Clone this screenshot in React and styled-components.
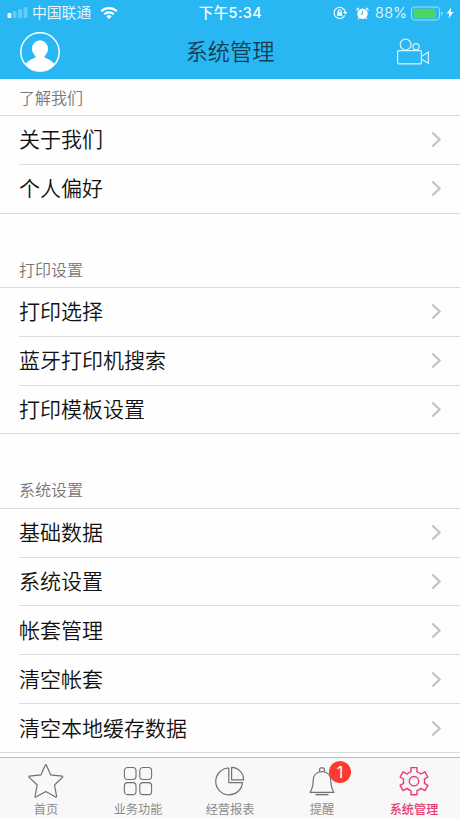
// App.jsx
import styled, { createGlobalStyle } from 'styled-components';

const GlobalStyle = createGlobalStyle`
  * {
    box-sizing: border-box;
  }

  body {
    margin: 0;
    background: #fefefe;
    font-family: Inter, "Noto Sans CJK SC", sans-serif;
  }
`;

const Screen = styled.div`
  display: flex;
  flex-direction: column;
  height: 818px;
  overflow: hidden;
  background: #fefefe;
`;

const Header = styled.header`
  flex: none;
  height: 79px;
  background: #29b7f4;
  color: white;
`;

const StatusBar = styled.div`
  display: grid;
  grid-template-columns: 1fr auto 1fr;
  align-items: center;
  height: 26px;
  padding: 0 6px 0 7px;
`;

const StatusSide = styled.div`
  display: flex;
  align-items: center;
  justify-content: ${(props) => (props.$end ? 'flex-end' : 'flex-start')};

  svg {
    display: block;
    flex: none;
  }
`;

const Carrier = styled.span`
  margin: 0 9px 0 4px;
  font-size: 14.8px;
  font-weight: 350;
  line-height: 26px;
  color: #eefaff;
`;

const Clock = styled.span`
  font-size: 14.4px;
  font-weight: 500;
  line-height: 26px;
  letter-spacing: 0.5px;
`;

const Percent = styled.span`
  margin: 0 4px 0 6px;
  font-size: 14.5px;
  font-weight: 350;
  line-height: 26px;
  letter-spacing: 0.2px;
`;

const StatusIcons = styled.span`
  display: flex;
  align-items: center;
  gap: 8px;
`;

const NavBar = styled.div`
  display: grid;
  grid-template-columns: 60px 1fr 60px;
  align-items: center;
  height: 52px;
  padding: 0 10px;
`;

const NavButton = styled.button`
  display: flex;
  justify-content: ${(props) => (props.$end ? 'flex-start' : 'center')};
  padding: 0 0 0 ${(props) => (props.$end ? 6 : 0)}px;
  border: none;
  background: none;
  color: white;
`;

const Title = styled.h1`
  margin: 0;
  text-align: center;
  font-size: 22.2px;
  font-weight: 350;
  line-height: 50px;
  color: #173e50;
`;

const Content = styled.main`
  flex: 1;
  min-height: 0;
  overflow: hidden;
`;

const SectionTitle = styled.h2`
  display: flex;
  align-items: flex-end;
  height: ${(props) => (props.$first ? 37 : 74.4)}px;
  margin: 0;
  padding: 0 19px 4.5px;
  border-bottom: 1px solid #d9d9db;
  font-size: 16px;
  font-weight: 350;
  line-height: 26px;
  color: #77777a;
`;

const List = styled.ul`
  margin: 0;
  padding: 0;
  list-style: none;
  border-bottom: 1px solid #d9d9db;
`;

const Row = styled.li`
  display: flex;
  align-items: center;
  justify-content: space-between;
  height: 48.82px;
  margin-left: 19px;
  padding: 1px 18px 0 0;
  border-bottom: 1px solid #dcdcde;
  font-size: 21px;
  font-weight: 350;
  line-height: 30px;
  color: #111;

  &:last-child {
    height: 47.82px;
    border-bottom: none;
  }
`;

const TabBar = styled.nav`
  display: grid;
  grid-template-columns: repeat(5, 1fr);
  flex: none;
  height: 61px;
  border-top: 1px solid #bcbcbe;
  background: #f8f8f8;
`;

const Tab = styled.a`
  display: flex;
  flex-direction: column;
  align-items: center;
  padding-top: 5px;
  color: ${(props) => (props.$active ? '#e83a75' : '#8b8b8b')};
  font-size: 12.2px;
  font-weight: ${(props) => (props.$active ? 500 : 400)};
  line-height: 17px;
`;

const TabIcon = styled.span`
  position: relative;
  display: block;
  width: 36px;
  height: 38px;
  color: ${(props) => (props.$active ? '#e83a75' : '#707070')};

  svg {
    display: block;
  }
`;

const Badge = styled.span`
  position: absolute;
  top: -2px;
  left: 25px;
  width: 22px;
  height: 22px;
  border-radius: 50%;
  background: #fc3a30;
  color: white;
  font-size: 16px;
  font-weight: 400;
  line-height: 22px;
  text-align: center;
`;

const SignalIcon = () => (
  <svg width="21" height="14" viewBox="0 0 21 14" fill="#fff">
    <rect x="0.5" y="7" width="3.8" height="5" rx="1" />
    <g opacity="0.28">
      <rect x="5.8" y="5" width="3.8" height="7" rx="1" />
      <rect x="11.2" y="3" width="3.8" height="9" rx="1" />
      <rect x="16.6" y="1" width="3.8" height="11" rx="1" />
    </g>
  </svg>
);

const WifiIcon = () => (
  <svg width="18" height="14" viewBox="0 0 18 14" fill="none" stroke="#fff" strokeWidth="2.2">
    <path d="M1.2 5.2a11.2 11.2 0 0 1 15.6 0" />
    <path d="M4.2 8.3a6.8 6.8 0 0 1 9.6 0" />
    <path d="M9 13 6.4 10.4a3.7 3.7 0 0 1 5.2 0z" fill="#fff" stroke="none" />
  </svg>
);

const RotationLockIcon = () => (
  <svg width="15" height="14" viewBox="0 0 15 14" fill="none" stroke="#fff" strokeWidth="1.1">
    <path d="M11.7 9.4A5.6 5.6 0 1 1 12.2 6" />
    <path d="M10.2 6h4.2l-2.1 2.6z" fill="#fff" stroke="none" />
    <rect x="4.2" y="6.3" width="5" height="3.8" rx="0.5" fill="#fff" stroke="none" />
    <path d="M5.2 6.5V5.2a1.5 1.5 0 0 1 3 0v1.3" />
  </svg>
);

const AlarmIcon = () => (
  <svg width="13" height="13" viewBox="0 0 13 13">
    <circle cx="6.5" cy="6.7" r="5.2" fill="#fff" />
    <path d="M0.9 2.8 2.4 1.3M12.1 2.8 10.6 1.3" stroke="#fff" strokeWidth="1.4" strokeLinecap="round" />
    <path d="M3 10.800l-.7 1M10 10.800l.7 1" stroke="#fff" strokeWidth="1.100" strokeLinecap="round" />
    <path d="M6.6 3.8v3.3H4.6" fill="none" stroke="#29b7f4" strokeWidth="1" />
  </svg>
);

const BatteryIcon = () => (
  <svg width="33" height="15" viewBox="0 0 33 15">
    <rect x="0.5" y="1" width="28" height="13" rx="3" fill="none" stroke="#a5e0fa" />
    <rect x="2.3" y="2.7" width="22.5" height="9.6" rx="1.2" fill="#4cd663" />
    <path d="M30.2 5.2a2.6 2.6 0 0 1 0 4.6z" fill="#a5e0fa" />
  </svg>
);

const BoltIcon = () => (
  <svg width="10" height="12" viewBox="-2 0 10 12" fill="#fff">
    <path d="M5.2 0.4 0.6 6.6h2.8L2.6 11.6 7.5 5H4.6z" />
  </svg>
);

const AvatarIcon = () => (
  <svg width="40" height="40" viewBox="0 0 40 40">
    <defs>
      <clipPath id="avatar">
        <circle cx="20" cy="20" r="19" />
      </clipPath>
    </defs>
    <g clipPath="url(#avatar)" fill="#fff">
      <ellipse cx="20" cy="16.8" rx="8" ry="8.6" />
      <path d="M15.5 22h9v3.4c3.5 1.6 9 3.2 10.8 8.6L28 42H12L4.7 34C6.5 28.6 12 27 15.5 25.4z" />
    </g>
    <circle cx="20" cy="20" r="19.2" fill="none" stroke="#fff" strokeWidth="1.5" />
  </svg>
);

const CameraIcon = () => (
  <svg width="34" height="28" viewBox="0 0 34 28" fill="none" stroke="#d8f2fd" strokeWidth="1.2">
    <circle cx="9.6" cy="6.6" r="5.4" />
    <circle cx="20" cy="8.8" r="3.1" />
    <rect x="1.6" y="12.6" width="23.8" height="13.2" rx="1" />
    <path d="M25.6 18.2 32.4 14v11.2l-6.8-4" />
  </svg>
);

const ChevronIcon = () => (
  <svg width="12" height="18" viewBox="0 0 12 18" fill="none" stroke="#c3c3c7" strokeWidth="2.3">
    <path d="M2.3 1.5 9.6 8.5l-7.3 7" />
  </svg>
);

const iconProps = {
  width: 36,
  height: 36,
  viewBox: '0 0 36 36',
  fill: 'none',
  stroke: 'currentColor',
  strokeWidth: 1.2,
  strokeLinejoin: 'round',
};

const StarIcon = () => (
  <svg {...iconProps}>
    <path d="M17.2 2.2q.6-1.2 1.2 0l4.3 9.7 11.3 1.3q1.2.3.4 1.2l-7.9 7.6 2.1 11.3q0 1.2-1 .8L17.8 28.6l-9.9 5.500q-1 .4-.9-.8l2.200-11.300L1.200 14.400q-.8-.9.4-1.200l11.300-1.300z" />
  </svg>
);

const GridIcon = () => (
  <svg {...iconProps} strokeWidth="1.1">
    <rect x="4.4" y="4.5" width="11.600" height="12" rx="3.200" />
    <rect x="19.800" y="4.500" width="11.800" height="12" rx="3.200" />
    <rect x="4.400" y="19.600" width="11.600" height="12" rx="3.200" />
    <rect x="19.800" y="19.600" width="11.800" height="12" rx="3.200" />
  </svg>
);

const PieIcon = () => (
  <svg {...iconProps}>
    <path d="M16.8 5A13.4 13.4 0 1 0 30.5 19.6H16.8z" />
    <path d="M19.6 4.3v12.5h12A12.5 12.5 0 0 0 19.6 4.3z" />
  </svg>
);

const BellIcon = () => (
  <svg {...iconProps}>
    <path d="M15.6 8.7V6.3q0-1.5 1.5-1.5h1.8q1.5 0 1.5 1.5v2.4" />
    <path d="M18 8.6c-5.5 0-8.9 3.6-8.9 9.4 0 6-.8 7.8-3 11.3h23.8c-2.2-3.5-3-5.3-3-11.3 0-5.8-3.4-9.4-8.9-9.4z" />
    <path d="M11.5 31.6h13" strokeWidth="1.4" />
  </svg>
);

const GearIcon = () => (
  <svg {...iconProps} strokeWidth="1.4">
    <path d="M15 4.6h6v4.2q2.2.7 4 2.2l3.9-2.2 3 5.2-3.5 2.1q.4 2.1 0 4.2l3.5 2.1-3 5.2-3.9-2.2q-1.8 1.5-4 2.2v4.2h-6v-4.2q-2.2-.7-4-2.2l-3.9 2.2-3-5.2 3.5-2.1q-.4-2.1 0-4.2l-3.5-2.1 3-5.2L11 11q1.8-1.500 4-2.200z" />
    <circle cx="18" cy="18.2" r="4.7" />
  </svg>
);

const sections = [
  { title: '了解我们', items: ['关于我们', '个人偏好'] },
  { title: '打印设置', items: ['打印选择', '蓝牙打印机搜索', '打印模板设置'] },
  { title: '系统设置', items: ['基础数据', '系统设置', '帐套管理', '清空帐套', '清空本地缓存数据'] },
];

const tabs = [
  { label: '首页', Icon: StarIcon },
  { label: '业务功能', Icon: GridIcon },
  { label: '经营报表', Icon: PieIcon },
  { label: '提醒', Icon: BellIcon, badge: 1 },
  { label: '系统管理', Icon: GearIcon, active: true },
];

export default function App() {
  return (
    <>
      <GlobalStyle />
      <Screen>
        <Header>
          <StatusBar>
            <StatusSide>
              <SignalIcon />
              <Carrier>中国联通</Carrier>
              <WifiIcon />
            </StatusSide>
            <Clock>下午5:34</Clock>
            <StatusSide $end>
              <StatusIcons>
                <RotationLockIcon />
                <AlarmIcon />
              </StatusIcons>
              <Percent>88%</Percent>
              <BatteryIcon />
              <BoltIcon />
            </StatusSide>
          </StatusBar>
          <NavBar>
            <NavButton aria-label="头像">
              <AvatarIcon />
            </NavButton>
            <Title>系统管理</Title>
            <NavButton $end aria-label="视频">
              <CameraIcon />
            </NavButton>
          </NavBar>
        </Header>

        <Content>
          {sections.map((section, index) => (
            <section key={section.title}>
              <SectionTitle $first={index === 0}>{section.title}</SectionTitle>
              <List>
                {section.items.map((item) => (
                  <Row key={item}>
                    {item}
                    <ChevronIcon />
                  </Row>
                ))}
              </List>
            </section>
          ))}
        </Content>

        <TabBar>
          {tabs.map(({ label, Icon, badge, active }) => (
            <Tab key={label} $active={active}>
              <TabIcon $active={active}>
                <Icon />
                {badge && <Badge>{badge}</Badge>}
              </TabIcon>
              {label}
            </Tab>
          ))}
        </TabBar>
      </Screen>
    </>
  );
}
